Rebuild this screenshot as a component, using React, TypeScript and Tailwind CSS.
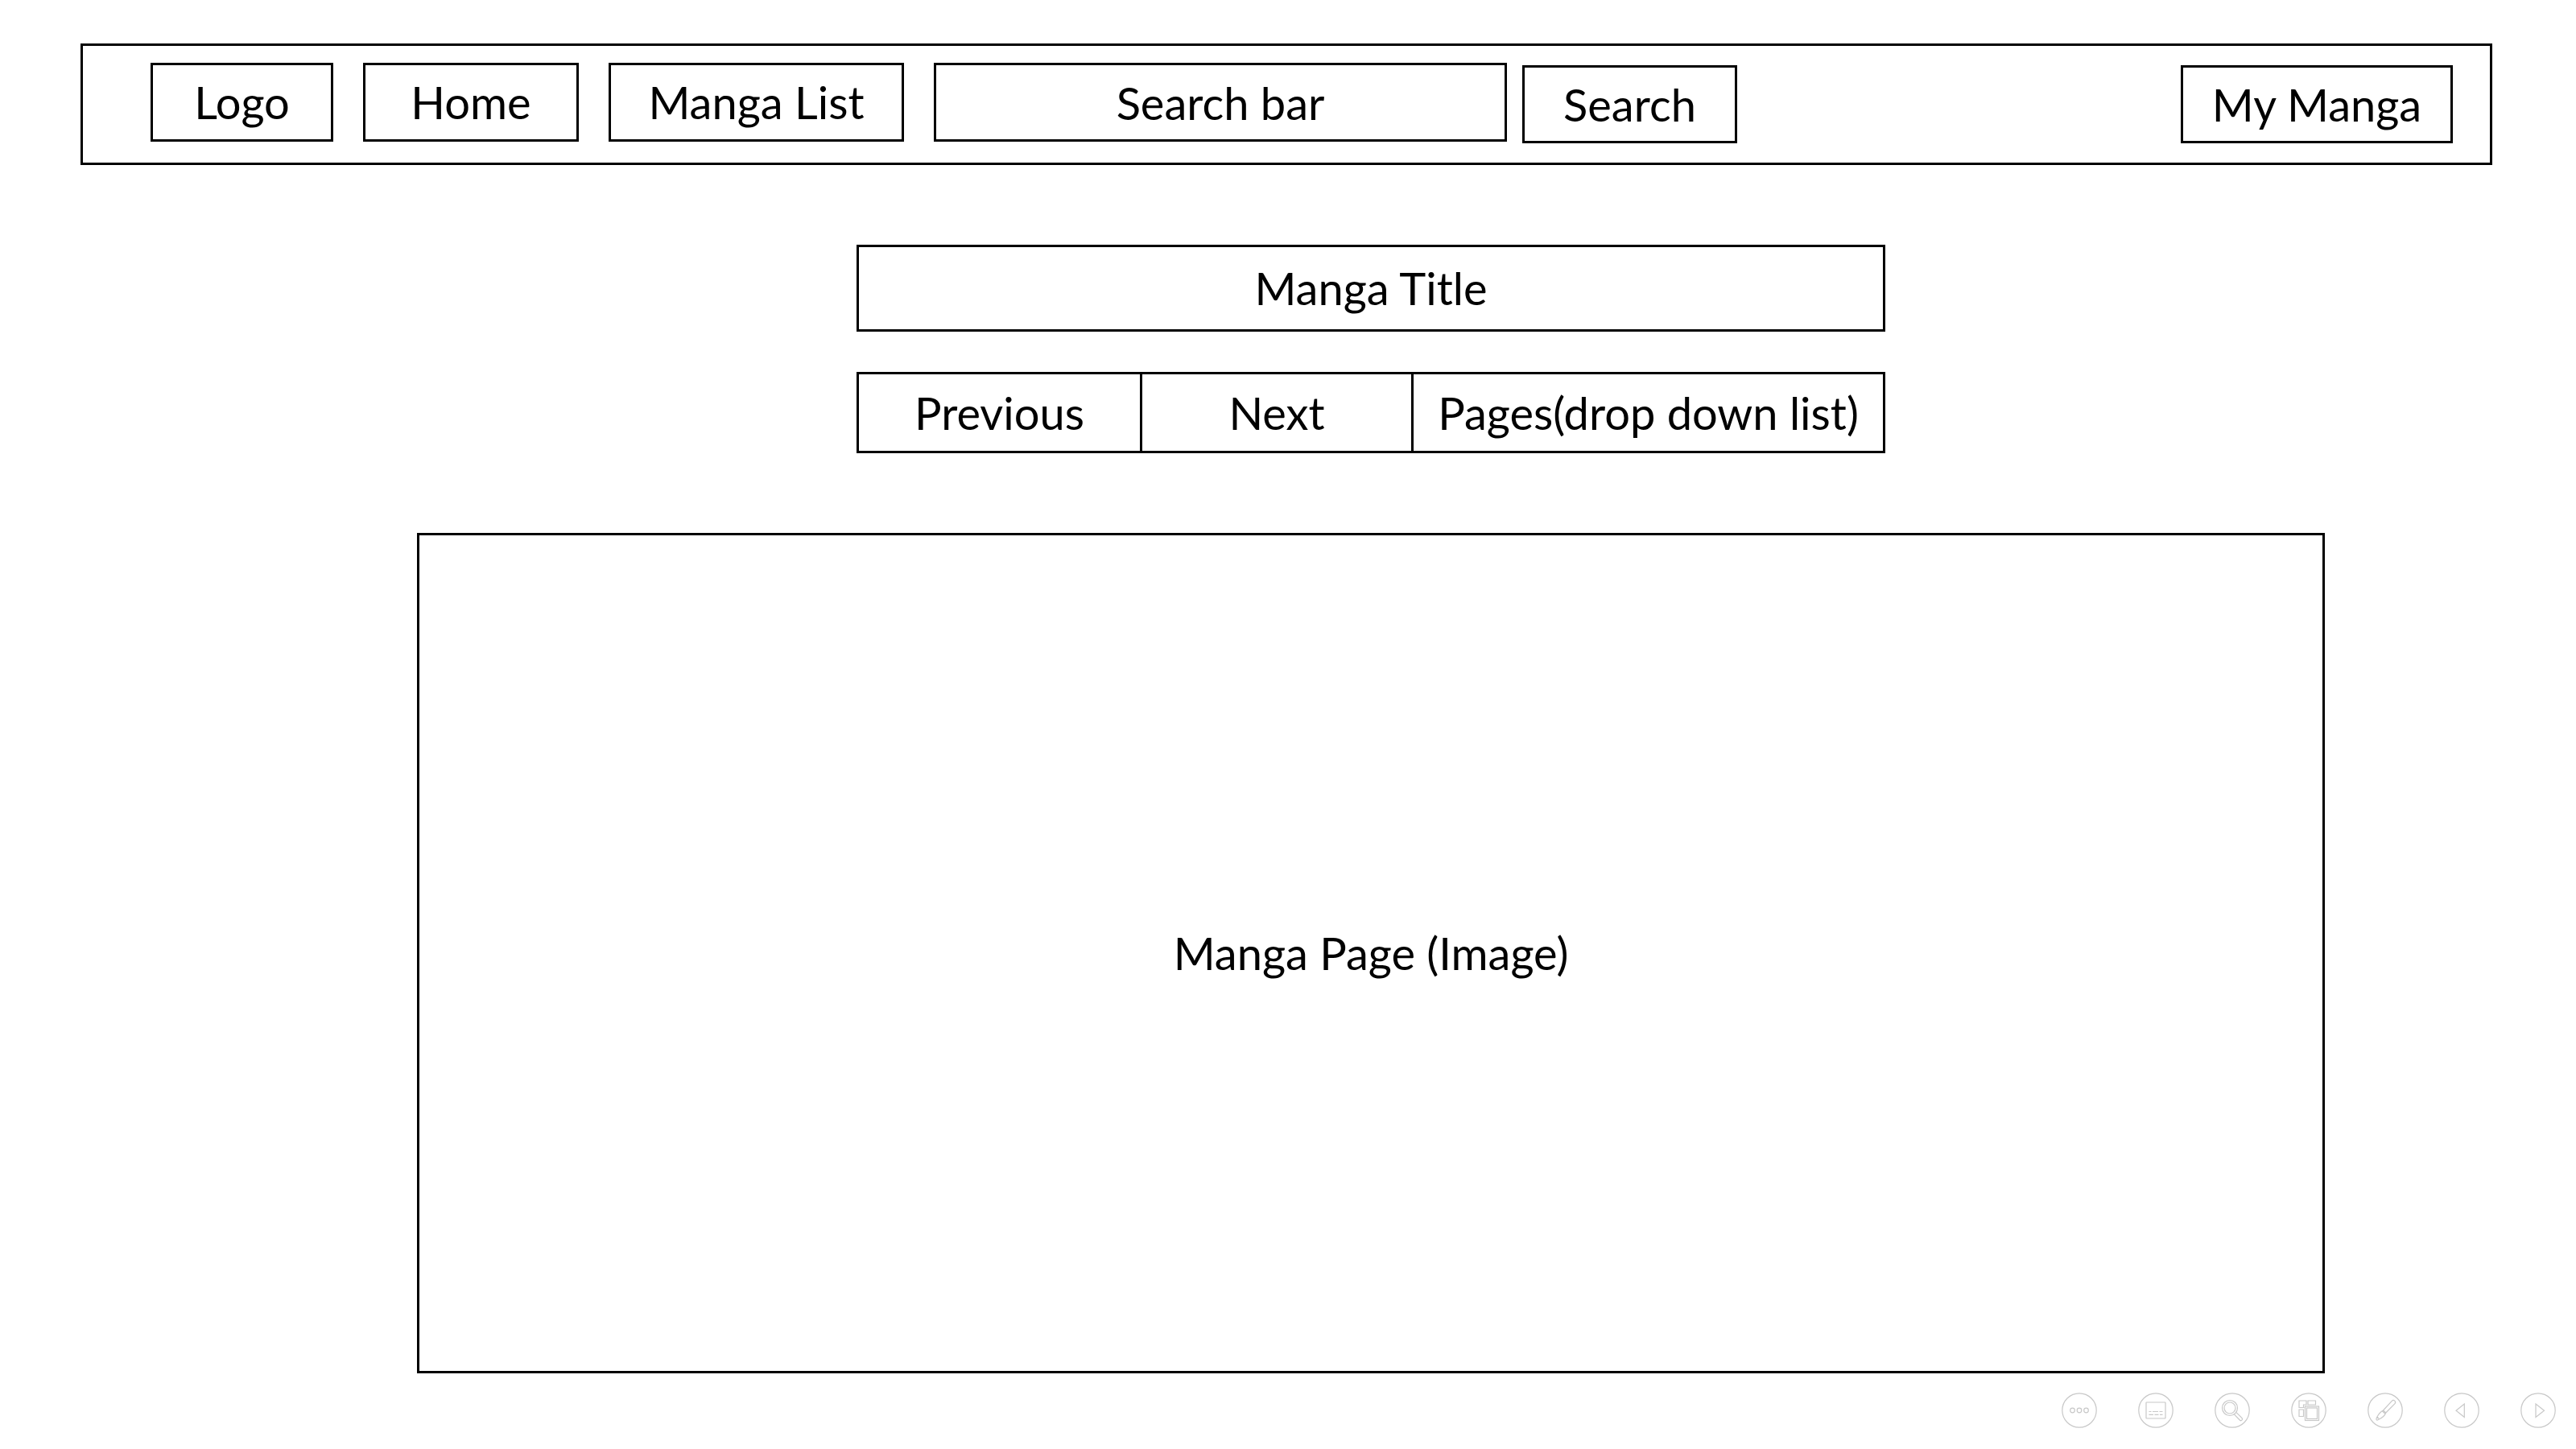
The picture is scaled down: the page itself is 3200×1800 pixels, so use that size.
import type { ReactNode } from "react";

const box = "flex items-center justify-center border-3 border-black bg-white";

function ToolButton({ label, children }: { label: string; children: ReactNode }) {
  return (
    <button type="button" aria-label={label} className="size-11 text-[#c8c8c8]">
      <svg viewBox="0 0 44 44" fill="none" stroke="currentColor" strokeWidth="1.2" className="size-11">
        <circle cx="22" cy="22" r="21.2" />
        {children}
      </svg>
    </button>
  );
}

export default function App() {
  return (
    <div className="flex min-h-screen flex-col bg-white pt-[54px] font-['Lato',sans-serif] text-[56px] leading-[64px] text-black">
      <header className="mr-[104px] ml-[100px] flex items-start border-3 border-black pt-[21px] pr-[46px] pb-6 pl-[84px]">
        <nav className="flex gap-[37px]">
          <a href="#logo" className={`${box} h-[98px] w-[227px]`}>Logo</a>
          <a href="#home" className={`${box} h-[98px] w-[268px]`}>Home</a>
          <a href="#list" className={`${box} h-[98px] w-[367px]`}>Manga List</a>
        </nav>
        <form className="mr-10 ml-[37px] flex gap-[19px] self-stretch" onSubmit={(e) => e.preventDefault()}>
          <input
            type="text"
            aria-label="Search bar"
            placeholder="Search bar"
            className="h-[98px] w-[712px] border-3 border-black text-center placeholder:text-black placeholder:opacity-100"
          />
          <button type="submit" className={`${box} mt-[3px] h-[97px] w-[267px] self-end`}>Search</button>
        </form>
        <a href="#my-manga" className={`${box} mt-[3px] ml-auto h-[97px] w-[338px] self-end`}>My Manga</a>
      </header>

      <main className="flex grow flex-col pt-[99px] pr-[312px] pl-[518px]">
        <div className="mx-auto w-full max-w-[1278px]">
          <h1 className={`${box} h-[108px]`}>Manga Title</h1>
          <div className="mt-[50px] flex h-[101px] divide-x-3 divide-black border-3 border-black">
            <button type="button" className="w-[352px]">Previous</button>
            <button type="button" className="w-[337px]">Next</button>
            <select
              aria-label="Pages"
              className="grow appearance-none bg-white text-center [text-align-last:center]"
            >
              <option>Pages(drop down list)</option>
            </select>
          </div>
        </div>
        <section className={`${box} mt-[99px] min-h-[1044px] grow`}>Manga Page (Image)</section>
      </main>

      <footer className="flex justify-end gap-[51px] pt-6 pr-[25px] pb-[26px]">
        <ToolButton label="More options">
          <circle cx="13.5" cy="22" r="2.8" />
          <circle cx="22" cy="22" r="2.8" />
          <circle cx="30.5" cy="22" r="2.8" />
        </ToolButton>
        <ToolButton label="Subtitles">
          <rect x="10" y="12" width="24" height="20" rx="0.5" />
          <path d="M13.500 23.500h3m1.500 0h7m1.500 0h4M13.500 27.300h5.500m1.500 0h5m1.500 0h3.500" />
        </ToolButton>
        <ToolButton label="Zoom">
          <circle cx="19" cy="19" r="9.5" />
          <circle cx="19" cy="19" r="7" />
          <path d="M24.5 27.2l7 7c1.700 1.500 4-.8 2.600-2.600l-7-7" />
        </ToolButton>
        <ToolButton label="All slides">
          <path d="M16.500 18.500H10V10h9v5h-3.500v3.500M10 21h5.500v8.500H10zM21 10h9.500v5H21z" />
          <rect x="17.500" y="17" width="17" height="17.500" />
          <rect x="19.500" y="19" width="13" height="13.500" />
        </ToolButton>
        <ToolButton label="Pen">
          <path d="M19.500 22L30.300 10.300C32.500 8 36 11 34 13.700L22.800 25M19.500 22l3.300 3c-1.500 4-5 6.500-8.800 8.300-3 2-4-.3-2.300-2.800C13.500 27 16 24 19.500 22zM18.500 23l3.500 3.200M12 30l2.500 2.800" />
        </ToolButton>
        <ToolButton label="Previous slide">
          <path d="M25.300 14v16.500L15 22.300z" />
        </ToolButton>
        <ToolButton label="Next slide">
          <path d="M19 14v16.500L29.500 22.300z" />
        </ToolButton>
      </footer>
    </div>
  );
}
